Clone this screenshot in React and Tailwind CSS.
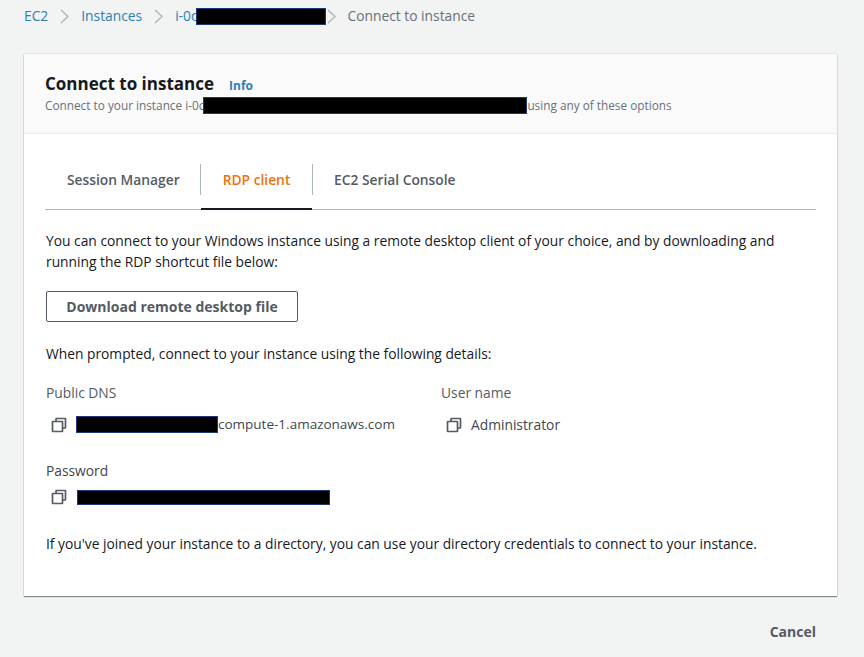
const Redacted = ({ className }) => (
  <span className={`inline-block bg-black border border-[#1f3a7a] shrink-0 ${className}`} />
);

const Crumb = () => (
  <svg viewBox="0 0 9 15" className="w-[9px] h-[15px] shrink-0 text-[#aab7b8]" fill="none" stroke="currentColor" strokeWidth="1.4">
    <path d="M1 1l7 6.5L1 14" />
  </svg>
);

const CopyIcon = () => (
  <svg viewBox="0 0 16 16" className="w-[16px] h-[16px] shrink-0 text-[#545b64]" fill="none" stroke="currentColor" strokeWidth="1.7">
    <path d="M5 4.5V2a.5.5 0 0 1 .5-.5H14a.5.5 0 0 1 .5.5v8.5a.5.5 0 0 1-.5.5h-2.5" />
    <rect x="1.5" y="4.5" width="10" height="10" rx="0.5" />
  </svg>
);

const App = () => (
  <div className="w-[864px] h-[657px] overflow-hidden bg-[#f2f3f3] text-[#16191f] font-['Open_Sans',sans-serif] flex flex-col">
    <nav className="h-[54px] shrink-0 pl-[24px] pt-[8px] pb-[30px] flex items-center text-[13.8px] leading-[18px]">
      <span className="text-[#2b7fb8]">EC2</span>
      <span className="mx-[12px] flex"><Crumb /></span>
      <span className="text-[#2b7fb8]">Instances</span>
      <span className="mx-[12px] flex"><Crumb /></span>
      <span className="text-[#2b7fb8]">i-0c</span>
      <Redacted className="w-[130px] h-[17px] -ml-[2px]" />
      <span className="ml-[1px] mr-[12px] flex"><Crumb /></span>
      <span className="text-[#687078]">Connect to instance</span>
    </nav>

    <main className="ml-[24px] w-[813px] h-[542px] shrink-0 bg-white shadow-[0_1px_1px_rgba(0,28,36,0.45),0_0_1px_rgba(0,28,36,0.3)] flex flex-col">
      <header className="h-[80px] shrink-0 bg-[#fafafa] border-b border-[#eaeded] px-[21px] pt-[18px]">
        <div className="flex items-baseline gap-[15px]">
          <h1 className="text-[17px] leading-[24px] font-bold text-[#16191f]">Connect to instance</h1>
          <span className="text-[12px] font-bold text-[#2b7fb8]">Info</span>
        </div>
        <p className="flex items-center h-[17px] mt-[1px] text-[11.8px] leading-[17px] text-[#687078]">
          <span>Connect to your instance i-0c</span>
          <Redacted className="w-[324px] h-[17px] -ml-[1px]" />
          <span>using any of these options</span>
        </p>
      </header>

      <section className="flex-1 px-[21px] pt-[27px] text-[13.8px] leading-[21px]">
        <div className="flex items-start pt-[3px] h-[49px] border-b border-[#aab7b8] relative font-semibold text-[#545b64]">
          <div className="w-[155px] h-[31px] flex items-center pl-[22px]">Session Manager</div>
          <div className="w-[113px] h-[31px] flex items-center justify-center border-x border-[#aab7b8] text-[#ec7211]">
            RDP client
          </div>
          <div className="h-[31px] flex items-center pl-[21px]">EC2 Serial Console</div>
          <span className="absolute left-[156px] -bottom-[1px] w-[111px] h-[2px] bg-[#16191f]" />
        </div>

        <div className="pl-[1px]">
          <p className="mt-[20px] w-[760px]">
            You can connect to your Windows instance using a remote desktop client of your choice, and by downloading and running the RDP shortcut file below:
          </p>

          <button className="mt-[19px] block w-[252px] h-[31px] border border-[#545b64] rounded-[2px] bg-white font-bold text-[14px] text-[#545b64]">
            Download remote desktop file
          </button>

          <p className="mt-[21px]">When prompted, connect to your instance using the following details:</p>

          <div className="mt-[18px] grid grid-cols-[395px_1fr]">
            <div>
              <div className="text-[#545b64]">Public DNS</div>
              <div className="mt-[11px] flex items-center pl-[5px] h-[21px]">
                <CopyIcon />
                <Redacted className="ml-[9px] w-[142px] h-[17px]" />
                <span className="text-[13.5px] text-[#414750]">compute-1.amazonaws.com</span>
              </div>
            </div>
            <div>
              <div className="text-[#545b64]">User name</div>
              <div className="mt-[11px] flex items-center pl-[5px] h-[21px]">
                <CopyIcon />
                <span className="ml-[9px] text-[#414750]">Administrator</span>
              </div>
            </div>
          </div>

          <div className="mt-[25px] text-[#414750]">Password</div>
          <div className="mt-[8px] flex items-center pl-[5px] h-[16px]">
            <CopyIcon />
            <Redacted className="ml-[10px] w-[253px] h-[15px]" />
          </div>

          <p className="mt-[28px]">If you've joined your instance to a directory, you can use your directory credentials to connect to your instance.</p>
        </div>
      </section>
    </main>

    <div className="flex justify-end pr-[48px] pt-[25px]">
      <span className="text-[14px] leading-[21px] font-bold text-[#545b64]">Cancel</span>
    </div>
  </div>
);

export default App;
